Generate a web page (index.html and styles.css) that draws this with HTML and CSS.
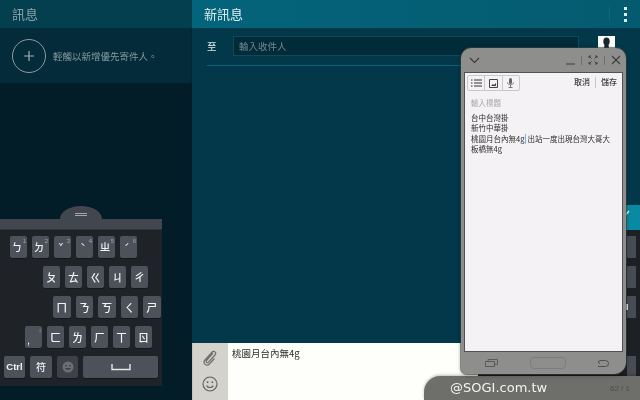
FILE: index.html
```html
<!DOCTYPE html>
<html lang="zh-Hant">
<head>
<meta charset="utf-8">
<title>新訊息</title>
<link rel="stylesheet" href="styles.css">
</head>
<body>
<div class="app">
  <aside class="side">
    <header class="side-head">訊息</header>
    <div class="priority">
      <span class="add-circle"><svg width="12" height="12" viewBox="0 0 12 12"><path d="M6 1v10M1 6h10" stroke="#9fb0b4" stroke-width="1.2" fill="none"/></svg></span>
      <span class="priority-text">輕觸以新增優先寄件人。</span>
    </div>
  </aside>
  <main class="compose">
    <header class="compose-head">
      <span>新訊息</span>
      <span class="head-actions"><i class="head-sep"></i><span class="dots"><i></i><i></i><i></i></span></span>
    </header>
    <div class="to-row">
      <span class="to-label">至</span>
      <div class="to-field">輸入收件人</div>
      <span class="contact"><svg width="17" height="19" viewBox="0 0 17 19"><rect width="17" height="19" fill="#fbfbf8"/><ellipse cx="8.500" cy="5.500" rx="3.200" ry="4" fill="#16262c"/><path d="M6.500 9h4l.5 3h-5z" fill="#16262c"/></svg></span>
    </div>
    <div class="to-line"></div>
    <div class="thread"></div>
    <div class="composer">
      <div class="composer-icons">
        <svg width="18" height="18" viewBox="0 0 18 18"><path d="M12 4 5.500 11.500c-1.200 1.400.8 3 2 1.700L14 6c2-2.300-1-5-3-2.800L4 11c-2.700 3.200 1.500 7 4.300 4l5.200-5.500" stroke="#6d6e69" stroke-width="1.200" fill="none"/></svg>
        <svg width="16" height="16" viewBox="0 0 16 16"><circle cx="8" cy="8" r="7" stroke="#5f605b" stroke-width="1.100" fill="none"/><circle cx="5.600" cy="6.200" r=".9" fill="#5f605b"/><circle cx="10.400" cy="6.200" r=".9" fill="#5f605b"/><path d="M4.600 9.600c1.600 2.600 5.200 2.600 6.800 0" stroke="#5f605b" stroke-width="1.100" fill="none"/></svg>
      </div>
      <div class="composer-text">桃園月台內無4g</div>
    </div>
  </main>

  <div class="kb-back">
    <div class="kb-back-top"><svg width="8" height="10" viewBox="0 0 8 10"><path d="M0 8 5 2" stroke="#e8f4f6" stroke-width="1.300" fill="none"/></svg></div>
    <div class="kb-back-keys">
      <i></i><i></i><i class="with-mark"></i><i class="blank"></i><i></i>
    </div>
  </div>

  <div class="watermark"><span class="wm-text">@SOGI.com.tw</span><span class="wm-count">62 / 1</span></div>

  <div class="keyboard">
    <div class="kb-dome"><i></i><i></i></div>
    <div class="kb-bar"></div>
    <div class="kb-rows">
      <div class="kb-row r1">
        <span class="key num">ㄅ<sup>1</sup></span><span class="key num">ㄉ<sup>2</sup></span><span class="key num tone">ˇ<sup>3</sup></span><span class="key num tone">ˋ<sup>4</sup></span><span class="key num">ㄓ<sup>5</sup></span><span class="key num tone">ˊ<sup>6</sup></span>
      </div>
      <div class="kb-row r2">
        <span class="key">ㄆ</span><span class="key">ㄊ</span><span class="key">ㄍ</span><span class="key">ㄐ</span><span class="key">ㄔ</span>
      </div>
      <div class="kb-row r3">
        <span class="key">ㄇ</span><span class="key">ㄋ</span><span class="key">ㄎ</span><span class="key">ㄑ</span><span class="key">ㄕ</span>
      </div>
      <div class="kb-row r4">
        <span class="key k-comma">,<sup>!</sup></span><span class="key">ㄈ</span><span class="key">ㄌ</span><span class="key">ㄏ</span><span class="key">ㄒ</span><span class="key">ㄖ</span>
      </div>
      <div class="kb-row r5">
        <span class="key k-ctrl">Ctrl</span>
        <span class="key k-sym">符</span>
        <span class="key k-emoji"><svg width="12" height="12" viewBox="0 0 12 12"><circle cx="6" cy="6" r="5.500" fill="#6b6e74"/><circle cx="4" cy="4.600" r=".9" fill="#3d4046"/><circle cx="8" cy="4.600" r=".9" fill="#3d4046"/><path d="M3 7h6c-.5 2.400-5.500 2.400-6 0z" fill="#3d4046"/></svg></span>
        <span class="key k-space"><svg width="20" height="7" viewBox="0 0 20 7"><path d="M1 0v5.500h18V0" stroke="#e6e7e9" stroke-width="1.400" fill="none"/></svg></span>
      </div>
    </div>
  </div>

  <section class="memo">
    <div class="memo-title">
      <svg width="11" height="7" viewBox="0 0 11 7"><path d="M1 1l4.500 4.500L10 1" stroke="#3a3a3a" stroke-width="1.100" fill="none"/></svg>
      <span class="memo-controls">
        <svg width="9" height="9" viewBox="0 0 9 9"><path d="M0 8h9" stroke="#4a4a4a" stroke-width="1.200"/></svg>
        <i class="memo-sep"></i>
        <svg width="10" height="10" viewBox="0 0 10 10"><path d="M1 1l2.500 2.500M9 1 6.500 3.500M1 9l2.500-2.500M9 9 6.500 6.500M1 1h2M1 1v2M9 1H7M9 1v2M1 9h2M1 9V7M9 9H7M9 9V7" stroke="#3f3f3f" stroke-width="1" fill="none"/></svg>
        <i class="memo-sep"></i>
        <svg width="10" height="10" viewBox="0 0 10 10"><path d="M1 1l8 8M9 1 1 9" stroke="#3f3f3f" stroke-width="1.100"/></svg>
      </span>
    </div>
    <div class="memo-page">
      <div class="memo-tools">
        <div class="tool-group">
          <span class="tool"><svg width="11" height="8" viewBox="0 0 11 8"><path d="M0 1h1.500M3 1h8M0 4h1.500M3 4h8M0 7h1.500M3 7h8" stroke="#333" stroke-width="1.100"/></svg></span>
          <span class="tool"><svg width="9" height="9" viewBox="0 0 9 9"><path d="M.5.500h8v8h-8z" stroke="#444" fill="none"/><path d="M2 7l2-2 1 1 2-2v3z" fill="#444"/></svg></span>
          <span class="tool"><svg width="7" height="10" viewBox="0 0 7 10"><rect x="2" y="0" width="3" height="6" rx="1.500" fill="#666"/><path d="M.5 4.500c0 3 6 3 6 0M3.500 7v2.500M1.500 9.500h4" stroke="#777" fill="none"/></svg></span>
        </div>
        <div class="memo-actions"><span>取消</span><i></i><span>儲存</span></div>
      </div>
      <div class="memo-subject">輸入標題</div>
      <div class="memo-body">
        <p>台中台灣掛</p>
        <p>新竹中華掛</p>
        <p>桃園月台內無4g<span class="caret"></span>出站一度出現台灣大哥大</p>
        <p>板橋無4g</p>
      </div>
    </div>
    <div class="memo-nav">
      <svg width="13" height="8" viewBox="0 0 13 8"><path d="M.5 2.500h9v5h-9zM3 2.500V.500h9.500v5h-3" stroke="#5a5a5a" fill="none"/></svg>
      <span class="home-key"></span>
      <svg width="12" height="9" viewBox="0 0 12 9"><path d="M3 1H8.500a3 3 0 0 1 0 6H1M3 1 1 2.500 3 4" transform="translate(0 .5)" stroke="#4f4f4f" fill="none"/></svg>
    </div>
  </section>
</div>
</body>
</html>
```

FILE: styles.css
```css
* { box-sizing: border-box; }
html, body { margin: 0; padding: 0; }
body { width: 640px; height: 400px; overflow: hidden; font-family: "Noto Sans CJK TC", "Liberation Sans", sans-serif; }
i { display: block; }

.app { position: relative; width: 640px; height: 400px; display: grid; grid-template-columns: 192px 448px; overflow: hidden; filter: blur(.35px); }

/* Left column */
.side { background: #021d28; display: flex; flex-direction: column; }
.side-head { height: 28px; padding: 0 12px; background: #033f4f; color: #8ba3a9; font-size: 13px; line-height: 28px; }
.priority { height: 55px; padding: 11px 0 0 12px; background: #042b39; display: flex; align-items: flex-start; gap: 7px; border-right: 1px solid #03252f; }
.add-circle { width: 34px; height: 34px; border: 1px solid #8b9ca1; border-radius: 50%; display: flex; align-items: center; justify-content: center; flex: none; }
.priority-text { color: #8599a0; font-size: 9.500px; line-height: 34px; white-space: nowrap; }

/* Compose column */
.compose { background: #02384a; display: flex; flex-direction: column; min-width: 0; }
.compose-head { height: 28px; padding: 0 0 0 12px; background: linear-gradient(90deg, #04647b, #045b70); color: #e0edef; font-size: 13px; line-height: 28px; display: flex; justify-content: space-between; }
.head-actions { display: flex; align-items: center; gap: 14px; padding-right: 13px; }
.head-sep { width: 1px; height: 14px; background: #0a6b80; }
.dots { display: flex; flex-direction: column; gap: 3px; }
.dots i { width: 3px; height: 3px; background: #dfecee; }
.to-row { height: 37px; padding: 8px 0 0 15px; display: flex; align-items: flex-start; }
.to-label { width: 26px; color: #d7e2e4; font-size: 9.500px; line-height: 20px; font-weight: 500; }
.to-field { width: 346px; height: 20px; padding-left: 5px; background: #022b39; border: 1px solid #0a4a59; color: #708790; font-size: 9.500px; line-height: 18px; }
.contact { margin-left: 19px; display: block; height: 19px; line-height: 0; }
.to-line { height: 1px; margin: 0 18px 0 15px; background: #0a6278; }
.thread { flex: 1; }
.composer { height: 57px; display: flex; background: #fefefa; }
.composer-icons { width: 36px; background: #d3d3cc; display: flex; flex-direction: column; align-items: center; gap: 9px; padding: 6px 1px 0 0; border-left: 1px solid #c2c4bc; }
.composer-text { padding: 2px 0 0 4px; color: #2e2e2e; font-size: 9.500px; line-height: 16px; }

/* Second keyboard behind the memo window */
.kb-back { position: absolute; left: 478px; top: 205px; width: 162px; height: 181px; background: #1d2025; }
.kb-back-top { height: 25px; background: #0a8aa2; padding: 4px 0 0 146px; line-height: 0; }
.kb-back-keys { display: flex; flex-direction: column; gap: 8px; padding: 6px 0 0 149px; }
.kb-back-keys i { width: 9px; height: 22px; background: #484c55; border-radius: 1px; }
.kb-back-keys .blank { background: transparent; }
.kb-back-keys .with-mark { position: relative; }
.kb-back-keys .with-mark::before { content: ""; position: absolute; left: -2px; top: 8px; width: 3px; height: 6px; background: #e6e6e6; }

/* Watermark strip */
.watermark { position: absolute; left: 424px; top: 376px; width: 216px; height: 24px; background: #6e6e6a; border-radius: 16px 0 0 0; display: flex; justify-content: space-between; box-shadow: 0 -1px 3px rgba(0,0,0,.25); }
.wm-text { padding: 3px 0 0 26px; color: #f3f3f0; font-family: "DejaVu Sans", sans-serif; font-size: 13px; line-height: 18px; }
.wm-count { padding: 7px 10px 0 0; color: #4d4d4b; font-family: "Liberation Sans", sans-serif; font-size: 8px; line-height: 12px; }

/* Floating keyboard */
.keyboard { position: absolute; left: 0; top: 206px; width: 162px; height: 180px; }
.kb-dome { height: 13px; width: 42px; margin-left: 60px; background: #42464f; border-radius: 21px 21px 0 0 / 13px 13px 0 0; padding-top: 7px; display: flex; flex-direction: column; align-items: center; gap: 1px; }
.kb-dome i { width: 12px; height: 1px; background: #a5a8ad; }
.kb-bar { height: 11px; background: #42464f; border-bottom: 1px solid #33363d; }
.kb-rows { height: 156px; background: #1f2227; display: flex; flex-direction: column; gap: 8px; padding-top: 6px; }
.kb-row { display: flex; gap: 5px; height: 22px; }
.r1 { padding-left: 10px; }
.r2 { padding-left: 43px; }
.r3 { padding-left: 53px; }
.r3 .key { width: 17.500px; }
.r4 { padding-left: 25px; }
.key { position: relative; width: 17px; height: 22px; background: #4d5159; border-radius: 2px; box-shadow: 0 1px 0 #15171a; color: #f2f3f5; font-size: 11px; font-weight: 500; line-height: 22px; text-align: center; }
.key sup { position: absolute; right: 1px; top: 2px; color: #a4a7ad; font-family: "Liberation Sans", sans-serif; font-size: 6px; font-weight: 400; line-height: 6px; }
.num { padding-right: 3px; font-size: 10.500px; }
.tone { font-size: 8px; }
.k-comma { padding-right: 10px; font-family: "Liberation Sans", sans-serif; line-height: 28px; }
.r5 { padding-left: 4px; }
.k-ctrl { width: 21px; font-family: "Liberation Sans", sans-serif; font-weight: 700; font-size: 9.500px; }
.k-sym { width: 22px; font-size: 10px; }
.k-emoji { width: 21px; background: #3e4147; display: flex; align-items: center; justify-content: center; }
.k-space { width: 75px; display: flex; align-items: center; justify-content: center; }

/* Floating memo window */
.memo { position: absolute; left: 461px; top: 48px; width: 165px; height: 326px; background: #8e8e8c; border-radius: 10px 10px 12px 6px; box-shadow: 0 0 0 1px rgba(60,70,70,.55), 0 1px 4px rgba(0,0,0,.4); display: flex; flex-direction: column; }
.memo-title { height: 24px; flex: none; padding: 0 5px 0 8px; display: flex; align-items: center; justify-content: space-between; }
.memo-controls { display: flex; align-items: center; gap: 6px; }
.memo-sep { width: 1px; height: 9px; background: #6f6f6e; }
.memo-page { flex: 1; margin: 0 3px; background: #f4f2f5; border: 1px solid #4e5254; padding: 2px 0 0 2px; display: flex; flex-direction: column; }
.memo-tools { display: flex; justify-content: space-between; align-items: flex-start; height: 16px; }
.tool-group { display: flex; width: 53px; height: 16px; border: 1px solid #c9c7ca; border-radius: 2px; }
.tool { flex: 1; display: flex; align-items: center; justify-content: center; border-right: 1px solid #c9c7ca; }
.tool:last-child { border-right: 0; }
.memo-actions { display: flex; align-items: center; gap: 5px; padding-right: 5px; color: #3c3c3c; font-size: 8px; line-height: 14px; font-weight: 500; }
.memo-actions i { width: 1px; height: 11px; background: #c8c6c9; }
.memo-subject { margin: 6px 0 0 4px; color: #aaa8ab; font-size: 7.500px; line-height: 12px; }
.memo-body { margin: 4px 0 0 4px; color: #2b2b2b; font-size: 7.500px; line-height: 10.300px; }
.memo-body p { margin: 0; white-space: nowrap; }
.caret { display: inline-block; width: 1px; height: 10px; margin: 0 1px; vertical-align: -2px; background: #6fb6e0; }
.memo-nav { height: 22px; flex: none; padding: 0 17px 0 24px; display: flex; align-items: center; justify-content: space-between; }
.home-key { width: 36px; height: 12px; border: 1px solid #7b7b7a; border-radius: 4px; }
```
